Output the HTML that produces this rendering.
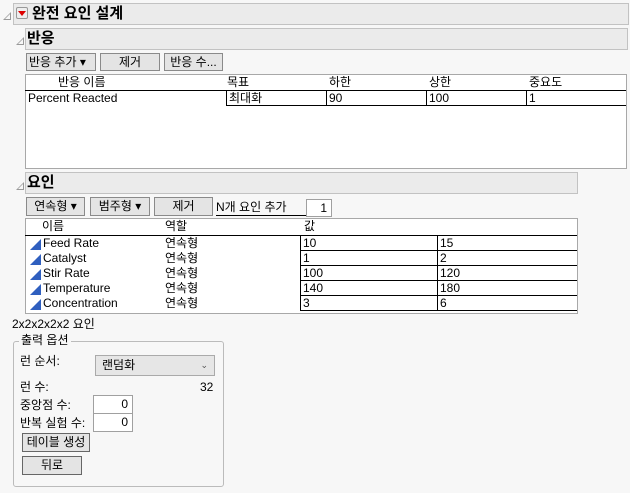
<!DOCTYPE html>
<html><head><meta charset="utf-8"><style>
*{box-sizing:border-box;margin:0;padding:0}
body{width:630px;height:493px;background:#f7f7f7;font-family:"Liberation Sans","Noto Sans CJK KR",sans-serif;font-size:12px;color:#000;position:relative;overflow:hidden}
.a{position:absolute;white-space:nowrap;line-height:15px}
.bar{position:absolute;background:#ebebeb;border:1px solid #c2c2c2}
.btn{position:absolute;background:#e4e4e4;border:1px solid #8a8a8a;text-align:center;line-height:16px;font-size:12px}
.tri{position:absolute;width:0;height:0;border-left:8px solid transparent;border-bottom:8px solid #999}
.tri:after{content:"";position:absolute;left:-6px;top:2px;border-left:5px solid transparent;border-bottom:5px solid #f7f7f7}
.box{position:absolute;background:#fff;border:1px solid #a8a8a8}
.hl{position:absolute;height:2px;background:#000}
.vl{position:absolute;width:1px;background:#000}
.inp{position:absolute;background:#fff;border:1px solid #a0a0a0;text-align:right;padding-right:4px;line-height:16px}
.ft{position:absolute;width:0;height:0;border-left:11px solid transparent;border-bottom:11px solid #2f5fbf}
</style></head><body>
<div class="tri" style="left:3px;top:12px"></div>
<div class="bar" style="left:13px;top:3px;width:616px;height:22px"></div>
<div class="a" style="left:16px;top:7px;width:12px;height:12px;border:1px solid #999;background:#eee;border-radius:2px"></div>
<div class="a" style="left:18px;top:11px;border-left:4px solid transparent;border-right:4px solid transparent;border-top:5px solid #d00"></div>
<div class="a" style="left:32px;top:3px;font-size:15px;font-weight:bold;line-height:22px">완전 요인 설계</div>

<div class="tri" style="left:16px;top:37px"></div>
<div class="bar" style="left:25px;top:28px;width:603px;height:22px"></div>
<div class="a" style="left:27px;top:28px;font-size:15px;font-weight:bold;line-height:22px">반응</div>

<div class="btn" style="left:26px;top:53px;width:70px;height:18px;text-align:left;padding-left:2px">반응 추가 ▾</div>
<div class="btn" style="left:100px;top:53px;width:60px;height:18px">제거</div>
<div class="btn" style="left:164px;top:53px;width:59px;height:18px">반응 수...</div>

<div class="box" style="left:25px;top:74px;width:602px;height:95px"></div>
<div class="a" style="left:58px;top:75px">반응 이름</div>
<div class="a" style="left:227px;top:75px">목표</div>
<div class="a" style="left:329px;top:75px">하한</div>
<div class="a" style="left:429px;top:75px">상한</div>
<div class="a" style="left:529px;top:75px">중요도</div>
<div class="hl" style="left:25px;top:90px;width:601px;height:1px"></div>
<div class="hl" style="left:226px;top:105px;width:400px;height:1px"></div>
<div class="vl" style="left:226px;top:91px;height:15px"></div>
<div class="vl" style="left:326px;top:91px;height:15px"></div>
<div class="vl" style="left:426px;top:91px;height:15px"></div>
<div class="vl" style="left:526px;top:91px;height:15px"></div>
<div class="a" style="left:28px;top:91px">Percent Reacted</div>
<div class="a" style="left:229px;top:91px">최대화</div>
<div class="a" style="left:329px;top:91px">90</div>
<div class="a" style="left:429px;top:91px">100</div>
<div class="a" style="left:529px;top:91px">1</div>

<div class="tri" style="left:16px;top:182px"></div>
<div class="bar" style="left:25px;top:172px;width:553px;height:22px"></div>
<div class="a" style="left:27px;top:172px;font-size:15px;font-weight:bold;line-height:22px">요인</div>

<div class="btn" style="left:26px;top:197px;width:59px;height:19px">연속형 ▾</div>
<div class="btn" style="left:90px;top:197px;width:60px;height:19px">범주형 ▾</div>
<div class="btn" style="left:154px;top:197px;width:59px;height:19px">제거</div>
<div class="a" style="left:216px;top:200px;width:90px;border-bottom:1px solid #000;line-height:15px">N개 요인 추가</div>
<div class="inp" style="left:306px;top:199px;width:26px;height:18px">1</div>

<div class="box" style="left:25px;top:218px;width:553px;height:96px"></div>
<div class="a" style="left:42px;top:219px">이름</div>
<div class="a" style="left:165px;top:219px">역할</div>
<div class="a" style="left:304px;top:219px">값</div>
<div class="hl" style="left:25px;top:235px;width:552px;height:1px"></div>
<div class="vl" style="left:300px;top:236px;height:75px"></div>
<div class="vl" style="left:437px;top:236px;height:75px"></div>
<div class="hl" style="left:300px;top:250px;width:277px;height:1px"></div>
<div class="hl" style="left:300px;top:265px;width:277px;height:1px"></div>
<div class="hl" style="left:300px;top:280px;width:277px;height:1px"></div>
<div class="hl" style="left:300px;top:295px;width:277px;height:1px"></div>
<div class="hl" style="left:300px;top:310px;width:277px;height:1px"></div>

<div class="ft" style="left:30px;top:239px"></div><div class="a" style="left:43px;top:236px">Feed Rate</div><div class="a" style="left:165px;top:236px">연속형</div><div class="a" style="left:303px;top:236px">10</div><div class="a" style="left:440px;top:236px">15</div>
<div class="ft" style="left:30px;top:254px"></div><div class="a" style="left:43px;top:251px">Catalyst</div><div class="a" style="left:165px;top:251px">연속형</div><div class="a" style="left:303px;top:251px">1</div><div class="a" style="left:440px;top:251px">2</div>
<div class="ft" style="left:30px;top:269px"></div><div class="a" style="left:43px;top:266px">Stir Rate</div><div class="a" style="left:165px;top:266px">연속형</div><div class="a" style="left:303px;top:266px">100</div><div class="a" style="left:440px;top:266px">120</div>
<div class="ft" style="left:30px;top:284px"></div><div class="a" style="left:43px;top:281px">Temperature</div><div class="a" style="left:165px;top:281px">연속형</div><div class="a" style="left:303px;top:281px">140</div><div class="a" style="left:440px;top:281px">180</div>
<div class="ft" style="left:30px;top:299px"></div><div class="a" style="left:43px;top:296px">Concentration</div><div class="a" style="left:165px;top:296px">연속형</div><div class="a" style="left:303px;top:296px">3</div><div class="a" style="left:440px;top:296px">6</div>

<div class="a" style="left:12px;top:317px">2x2x2x2x2 요인</div>
<div class="a" style="left:13px;top:341px;width:211px;height:146px;border:1px solid #bbb;border-radius:3px"></div>
<div class="a" style="left:19px;top:333px;background:#f7f7f7;padding:0 2px">출력 옵션</div>
<div class="a" style="left:20px;top:354px">런 순서:</div>
<div class="a" style="left:95px;top:355px;width:120px;height:21px;background:#e6e6e6;border:1px solid #aaa;padding-left:6px;line-height:19px">랜덤화<span style="position:absolute;right:6px;font-size:9px;color:#555">⌄</span></div>
<div class="a" style="left:20px;top:380px">런 수:</div>
<div class="a" style="left:200px;top:380px">32</div>
<div class="a" style="left:20px;top:398px">중앙점 수:</div>
<div class="inp" style="left:93px;top:395px;width:40px;height:19px">0</div>
<div class="a" style="left:20px;top:416px">반복 실험 수:</div>
<div class="inp" style="left:93px;top:413px;width:40px;height:19px">0</div>
<div class="btn" style="left:22px;top:433px;width:68px;height:19px;border-color:#666">테이블 생성</div>
<div class="btn" style="left:22px;top:456px;width:60px;height:19px;border-color:#666">뒤로</div>
</body></html>
